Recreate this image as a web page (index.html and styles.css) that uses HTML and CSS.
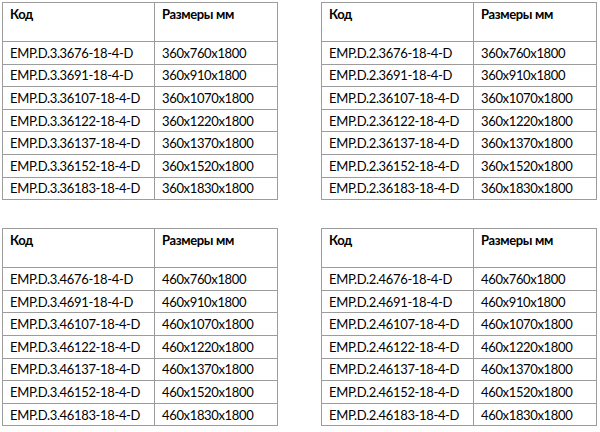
FILE: index.html
```html
<!DOCTYPE html>
<html lang="ru">
<head>
<meta charset="utf-8">
<title>Размеры</title>
<link rel="stylesheet" href="styles.css">
</head>
<body>
<div class="page">
  <table class="spec">
    <tr class="head"><th class="c1">Код</th><th class="c2">Размеры мм</th></tr>
    <tr><td>EMP.D.3.3676-18-4-D</td><td>360x760x1800</td></tr>
    <tr><td>EMP.D.3.3691-18-4-D</td><td>360x910x1800</td></tr>
    <tr><td>EMP.D.3.36107-18-4-D</td><td>360x1070x1800</td></tr>
    <tr><td>EMP.D.3.36122-18-4-D</td><td>360x1220x1800</td></tr>
    <tr><td>EMP.D.3.36137-18-4-D</td><td>360x1370x1800</td></tr>
    <tr><td>EMP.D.3.36152-18-4-D</td><td>360x1520x1800</td></tr>
    <tr><td>EMP.D.3.36183-18-4-D</td><td>360x1830x1800</td></tr>
  </table>
  <table class="spec">
    <tr class="head"><th class="c1">Код</th><th class="c2">Размеры мм</th></tr>
    <tr><td>EMP.D.2.3676-18-4-D</td><td>360x760x1800</td></tr>
    <tr><td>EMP.D.2.3691-18-4-D</td><td>360x910x1800</td></tr>
    <tr><td>EMP.D.2.36107-18-4-D</td><td>360x1070x1800</td></tr>
    <tr><td>EMP.D.2.36122-18-4-D</td><td>360x1220x1800</td></tr>
    <tr><td>EMP.D.2.36137-18-4-D</td><td>360x1370x1800</td></tr>
    <tr><td>EMP.D.2.36152-18-4-D</td><td>360x1520x1800</td></tr>
    <tr><td>EMP.D.2.36183-18-4-D</td><td>360x1830x1800</td></tr>
  </table>
  <table class="spec">
    <tr class="head"><th class="c1">Код</th><th class="c2">Размеры мм</th></tr>
    <tr><td>EMP.D.3.4676-18-4-D</td><td>460x760x1800</td></tr>
    <tr><td>EMP.D.3.4691-18-4-D</td><td>460x910x1800</td></tr>
    <tr><td>EMP.D.3.46107-18-4-D</td><td>460x1070x1800</td></tr>
    <tr><td>EMP.D.3.46122-18-4-D</td><td>460x1220x1800</td></tr>
    <tr><td>EMP.D.3.46137-18-4-D</td><td>460x1370x1800</td></tr>
    <tr><td>EMP.D.3.46152-18-4-D</td><td>460x1520x1800</td></tr>
    <tr><td>EMP.D.3.46183-18-4-D</td><td>460x1830x1800</td></tr>
  </table>
  <table class="spec">
    <tr class="head"><th class="c1">Код</th><th class="c2">Размеры мм</th></tr>
    <tr><td>EMP.D.2.4676-18-4-D</td><td>460x760x1800</td></tr>
    <tr><td>EMP.D.2.4691-18-4-D</td><td>460x910x1800</td></tr>
    <tr><td>EMP.D.2.46107-18-4-D</td><td>460x1070x1800</td></tr>
    <tr><td>EMP.D.2.46122-18-4-D</td><td>460x1220x1800</td></tr>
    <tr><td>EMP.D.2.46137-18-4-D</td><td>460x1370x1800</td></tr>
    <tr><td>EMP.D.2.46152-18-4-D</td><td>460x1520x1800</td></tr>
    <tr><td>EMP.D.2.46183-18-4-D</td><td>460x1830x1800</td></tr>
  </table>
</div>
</body>
</html>
```

FILE: styles.css
```css
html, body {
  margin: 0;
  padding: 0;
  background: #ffffff;
}

body {
  font-family: "Lato", "Open Sans", sans-serif;
  font-size: 13px;
  letter-spacing: -0.35px;
  color: #000000;
}

.page {
  display: grid;
  grid-template-columns: 276px 276px;
  column-gap: 43px;
  row-gap: 28px;
  padding: 2px 0 0 2px;
}

.spec {
  width: 276px;
  border-collapse: collapse;
  table-layout: fixed;
}

.spec th,
.spec td {
  border: 1px solid #9c9c9c;
  padding: 0 7px;
  text-align: left;
  white-space: nowrap;
  line-height: 16px;
}

.spec .c1 {
  width: 152px;
}

.spec th {
  font-weight: bold;
  vertical-align: top;
  height: 39px;
  padding-top: 3px;
  box-sizing: border-box;
}

.spec td {
  height: 22.6px;
  box-sizing: border-box;
  vertical-align: middle;
}
```
